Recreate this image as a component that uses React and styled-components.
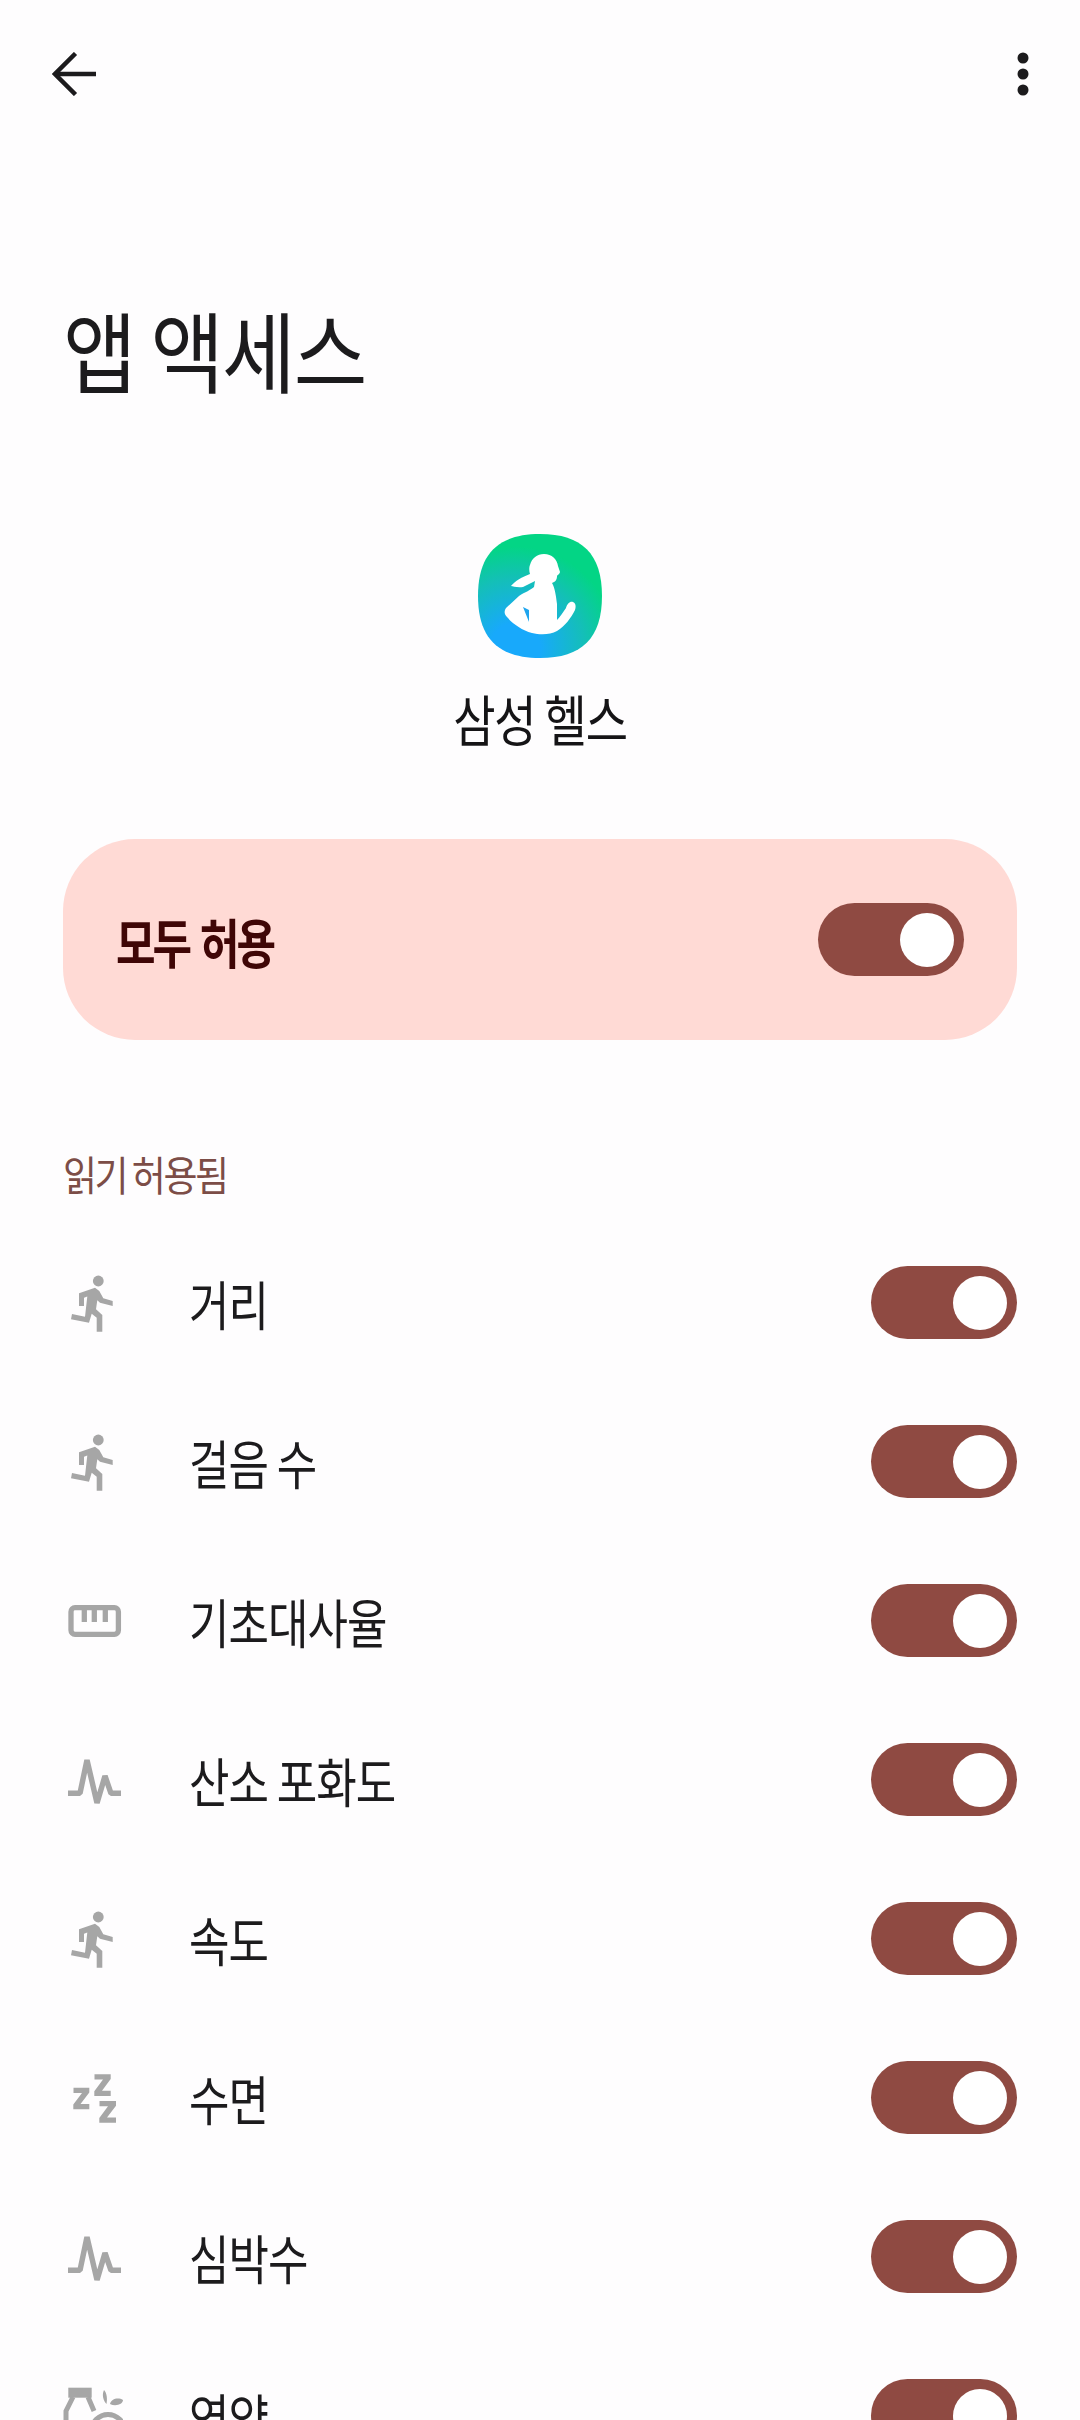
import React from "react";
import styled, { createGlobalStyle } from "styled-components";

const Global = createGlobalStyle`
  html, body { margin: 0; padding: 0; background: #fefdfe; }
  body { font-family: "Noto Sans CJK KR", "Noto Sans", sans-serif; }
`;

const Page = styled.div`
  width: 1080px;
  height: 2420px;
  overflow: hidden;
  background: #fefdfe;
  color: #1c1b1d;
`;

const TopBar = styled.header`
  height: 74px;
  padding: 37px 51px 0 52px;
  display: flex;
  align-items: center;
  justify-content: space-between;
`;

const IconBtn = styled.span`
  display: flex;
  line-height: 0;
`;

const Title = styled.h1`
  margin: 191px 0 0 63px;
  height: 92px;
  font-size: 80px;
  line-height: 92px;
  font-weight: 400;
  letter-spacing: -2px;
  transform: scaleY(1.1);
  transform-origin: left center;
`;

const AppBlock = styled.section`
  margin-top: 140px;
  display: flex;
  flex-direction: column;
  align-items: center;
`;

const AppName = styled.div`
  margin-top: 29px;
  font-size: 46px;
  line-height: 60px;
  letter-spacing: -1.2px;
  color: #151416;
  transform: scaleY(1.18);
`;

const AllowPanel = styled.section`
  margin: 92px 63px 0;
  height: 201px;
  padding: 0 53px;
  border-radius: 72px;
  background: #ffdad5;
  display: flex;
  align-items: center;
  justify-content: space-between;
`;

const AllowLabel = styled.div`
  font-size: 43px;
  line-height: 60px;
  font-weight: 700;
  letter-spacing: -3px;
  word-spacing: 4px;
  color: #3f0606;
  transform: scaleY(1.25);
`;

const Track = styled.span`
  flex: none;
  width: 146px;
  height: 73px;
  border-radius: 37px;
  background: #8f4a42;
  display: flex;
  align-items: center;
  justify-content: flex-end;
  padding-right: 10px;
  box-sizing: border-box;
`;

const Thumb = styled.span`
  width: 54px;
  height: 54px;
  border-radius: 50%;
  background: #fff;
`;

const SectionLabel = styled.div`
  margin: 111px 63px 0;
  height: 44px;
  font-size: 37px;
  line-height: 44px;
  letter-spacing: -2.5px;
  color: #7c4d47;
  transform: scaleY(1.1);
`;

const List = styled.ul`
  list-style: none;
  margin: 28px 0 0;
  padding: 0 63px;
  display: flex;
  flex-direction: column;
`;

const Row = styled.li`
  height: 159px;
  display: flex;
  align-items: center;
`;

const RowIcon = styled.span`
  flex: none;
  width: 60px;
  height: 60px;
  margin-right: 66px;
  color: #a6a6a6;
  line-height: 0;
`;

const RowLabel = styled.span`
  flex: 1;
  font-size: 44px;
  line-height: 60px;
  letter-spacing: -1px;
  color: #1c1b1d;
  transform: scaleY(1.22);
`;

const Back = () => (
  <svg width="44" height="44" viewBox="0 0 44 44" fill="none" stroke="#1c1b1d" strokeWidth="4.5">
    <path d="M44 22H4" />
    <path d="M23.5 1.5 3 22l20.5 20.5" />
  </svg>
);

const More = () => (
  <svg width="12" height="44" viewBox="0 0 12 44" fill="#1c1b1d">
    <circle cx="6" cy="6" r="5.5" />
    <circle cx="6" cy="22" r="5.5" />
    <circle cx="6" cy="38" r="5.5" />
  </svg>
);

const Runner = () => (
  <svg width="60" height="60" viewBox="0 0 60 60" fill="currentColor">
    <circle cx="35.3" cy="8" r="5.4" />
    <path d="M16 20.3 32 14.7 36.3 18 40.3 25.3 49.7 28V33L37 29.7 34.3 27.3 33 36.3 39.3 42V58.7H33.7V44.7L28.7 40.7 26 49.7 8 46.3 9 41 22 43.7 24.3 23.5 21 24.8V33H16Z" />
  </svg>
);

const Ruler = () => (
  <svg width="60" height="60" viewBox="0 0 60 60" fill="none" stroke="currentColor" strokeWidth="5.3">
    <rect x="8" y="16.700" width="47.400" height="26.600" rx="4" />
    <path d="M21.300 16v15M31.300 16v15M42.300 16v15" />
  </svg>
);

const Pulse = () => (
  <svg width="60" height="60" viewBox="0 0 60 60" fill="none" stroke="currentColor" strokeWidth="5.5" strokeLinejoin="bevel">
    <path d="M5 43.3h12L24 10l10 43 8-27 6 17.3h10" />
  </svg>
);

const Sleep = () => (
  <svg width="60" height="60" viewBox="0 0 60 60" fill="currentColor">
    <path d="M10.500 19.700H26.300V24.500L17.500 36H26.300V41.300H10.300V36.500L19 25H10.500Z" />
    <path d="M31.500 6.300H47.700V11.100L39 22.700H47.700V28H31.300V23.200L40 11.600H31.500Z" />
    <path d="M36.500 33H53V37.800L44 49.400H53V54.700H36.300V49.900L45 38.300H36.500Z" />
  </svg>
);

const Food = () => (
  <svg width="60" height="60" viewBox="0 0 60 60" fill="none" stroke="currentColor" strokeWidth="5">
    <path d="M5.300 1.700h23.400v10H5.300Z" fill="currentColor" stroke="none" />
    <path d="M10 11 3 25v35M25 11l6 14" />
    <circle cx="45" cy="45" r="16.500" />
    <path d="M41 4c3 3 3.500 9 2.500 14-3-3-5-9-2.500-14ZM47 18c1-5 8-7 13-4 0 4-7 7-13 4Z" fill="currentColor" stroke="none" />
  </svg>
);

const AppIcon = () => (
  <svg width="124" height="124" viewBox="0 0 124 124">
    <defs>
      <radialGradient id="hg" cx="0.3" cy="0.92" r="1">
        <stop offset="0.2" stopColor="#18a9fb" />
        <stop offset="0.56" stopColor="#14bfb8" />
        <stop offset="0.82" stopColor="#03d585" />
      </radialGradient>
    </defs>
    <path d="M62 0C104 0 124 20 124 62S104 124 62 124 0 104 0 62 20 0 62 0Z" fill="url(#hg)" />
    <path
      fill="#fff"
      d="M66 20C74 20 79 25 80 32L82 38C82 40 79 41 79 42 79 46 77 48 74 49 77 54 78 62 79 70L79 86C82 83 85 78 88 74 89 70 92 67 95 68 98 69 98 73 97 76 93 84 87 92 79 97 72 101 62 101 54 99 44 96 35 90 29 83 26 80 26 77 28 74L41 62C47 58 53 56 56 53L57 47 45 53C39 54 35 52 33 52 37 47 44 43 52 40 51 37 51 33 52 31 54 24 59 20 66 20Z"
    />
    <path d="M45 73 51 76 51 88Z" fill="#1fa5ee" />
  </svg>
);

const rows = [
  ["거리", Runner],
  ["걸음 수", Runner],
  ["기초대사율", Ruler],
  ["산소 포화도", Pulse],
  ["속도", Runner],
  ["수면", Sleep],
  ["심박수", Pulse],
  ["영양", Food],
];

const Toggle = () => (
  <Track>
    <Thumb />
  </Track>
);

export default function App() {
  return (
    <Page>
      <Global />
      <TopBar>
        <IconBtn><Back /></IconBtn>
        <IconBtn><More /></IconBtn>
      </TopBar>
      <Title>앱 액세스</Title>
      <AppBlock>
        <AppIcon />
        <AppName>삼성 헬스</AppName>
      </AppBlock>
      <AllowPanel>
        <AllowLabel>모두 허용</AllowLabel>
        <Toggle />
      </AllowPanel>
      <SectionLabel>읽기 허용됨</SectionLabel>
      <List>
        {rows.map(([label, Icon]) => (
          <Row key={label}>
            <RowIcon><Icon /></RowIcon>
            <RowLabel>{label}</RowLabel>
            <Toggle />
          </Row>
        ))}
      </List>
    </Page>
  );
}
